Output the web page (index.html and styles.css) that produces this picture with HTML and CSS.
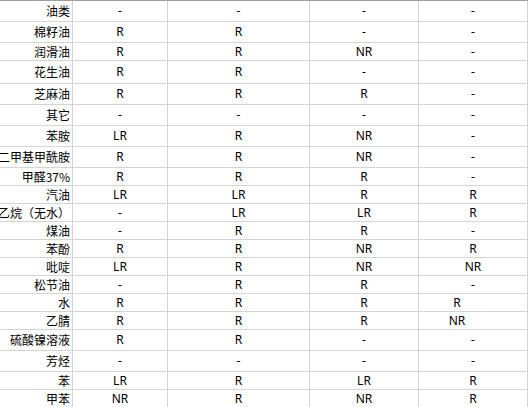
FILE: index.html
```html
<!DOCTYPE html>
<html lang="zh-CN">
<head>
<meta charset="utf-8">
<title>耐化学性</title>
<link rel="stylesheet" href="styles.css">
</head>
<body>
<div class="sheet">
  <div class="row h21"><div class="name">油类</div><div class="v">-</div><div class="v">-</div><div class="v">-</div><div class="v">-</div></div>
  <div class="row h21"><div class="name">棉籽油</div><div class="v">R</div><div class="v">R</div><div class="v">-</div><div class="v">-</div></div>
  <div class="row h18"><div class="name">润滑油</div><div class="v">R</div><div class="v">R</div><div class="v">NR</div><div class="v">-</div></div>
  <div class="row h23"><div class="name">花生油</div><div class="v">R</div><div class="v">R</div><div class="v">-</div><div class="v">-</div></div>
  <div class="row h21"><div class="name">芝麻油</div><div class="v">R</div><div class="v">R</div><div class="v">R</div><div class="v">-</div></div>
  <div class="row h21"><div class="name">其它</div><div class="v">-</div><div class="v">-</div><div class="v">-</div><div class="v">-</div></div>
  <div class="row h21"><div class="name">苯胺</div><div class="v">LR</div><div class="v">R</div><div class="v">NR</div><div class="v">-</div></div>
  <div class="row h21"><div class="name">二甲基甲酰胺</div><div class="v">R</div><div class="v">R</div><div class="v">NR</div><div class="v">-</div></div>
  <div class="row h18"><div class="name">甲醛37%</div><div class="v">R</div><div class="v">R</div><div class="v">R</div><div class="v">-</div></div>
  <div class="row h18"><div class="name">汽油</div><div class="v">LR</div><div class="v">LR</div><div class="v">R</div><div class="v">R</div></div>
  <div class="row h18"><div class="name">乙烷（无水）</div><div class="v">-</div><div class="v">LR</div><div class="v">LR</div><div class="v">R</div></div>
  <div class="row h18"><div class="name">煤油</div><div class="v">-</div><div class="v">R</div><div class="v">R</div><div class="v">-</div></div>
  <div class="row h18"><div class="name">苯酚</div><div class="v">R</div><div class="v">R</div><div class="v">NR</div><div class="v">R</div></div>
  <div class="row h18"><div class="name">吡啶</div><div class="v">LR</div><div class="v">R</div><div class="v">NR</div><div class="v">NR</div></div>
  <div class="row h18"><div class="name">松节油</div><div class="v">-</div><div class="v">R</div><div class="v">R</div><div class="v">-</div></div>
  <div class="row h18"><div class="name">水</div><div class="v">R</div><div class="v">R</div><div class="v">R</div><div class="v shifted">R</div></div>
  <div class="row h18"><div class="name">乙腈</div><div class="v">R</div><div class="v">R</div><div class="v">R</div><div class="v shifted">NR</div></div>
  <div class="row h21"><div class="name">硫酸镍溶液</div><div class="v">R</div><div class="v">R</div><div class="v">-</div><div class="v">-</div></div>
  <div class="row h21"><div class="name">芳烃</div><div class="v">-</div><div class="v">-</div><div class="v">-</div><div class="v">-</div></div>
  <div class="row h18"><div class="name">苯</div><div class="v">LR</div><div class="v">R</div><div class="v">LR</div><div class="v">R</div></div>
  <div class="row h18"><div class="name">甲苯</div><div class="v">NR</div><div class="v">R</div><div class="v">NR</div><div class="v">R</div></div>
</div>
</body>
</html>
```

FILE: styles.css
```css
html, body {
  margin: 0;
  padding: 0;
  background: #ffffff;
  overflow: hidden;
}

body {
  font-family: "Noto Sans", "Noto Sans CJK SC", sans-serif;
  font-size: 12px;
  color: #000000;
}

.sheet {
  width: 528px;
  border-top: 1px solid #a0a0a0;
}

.row {
  display: grid;
  grid-template-columns: 73px 95px 142px 109px 109px;
}

.row > div {
  box-sizing: border-box;
  border-right: 1px solid #d4d4d4;
  border-bottom: 1px solid #d4d4d4;
  display: flex;
  align-items: center;
  justify-content: center;
  white-space: nowrap;
  line-height: 1;
}

.row > .name {
  justify-content: flex-end;
  padding-right: 2px;
  overflow: visible;
  font-family: "Noto Sans CJK SC", sans-serif;
  text-spacing-trim: space-all;
  font-feature-settings: "halt" 0, "chws" 0;
}

.row > .shifted {
  padding-right: 32px;
}

.h18 { height: 18px; }
.h21 { height: 21px; }
.h23 { height: 23px; }
```
